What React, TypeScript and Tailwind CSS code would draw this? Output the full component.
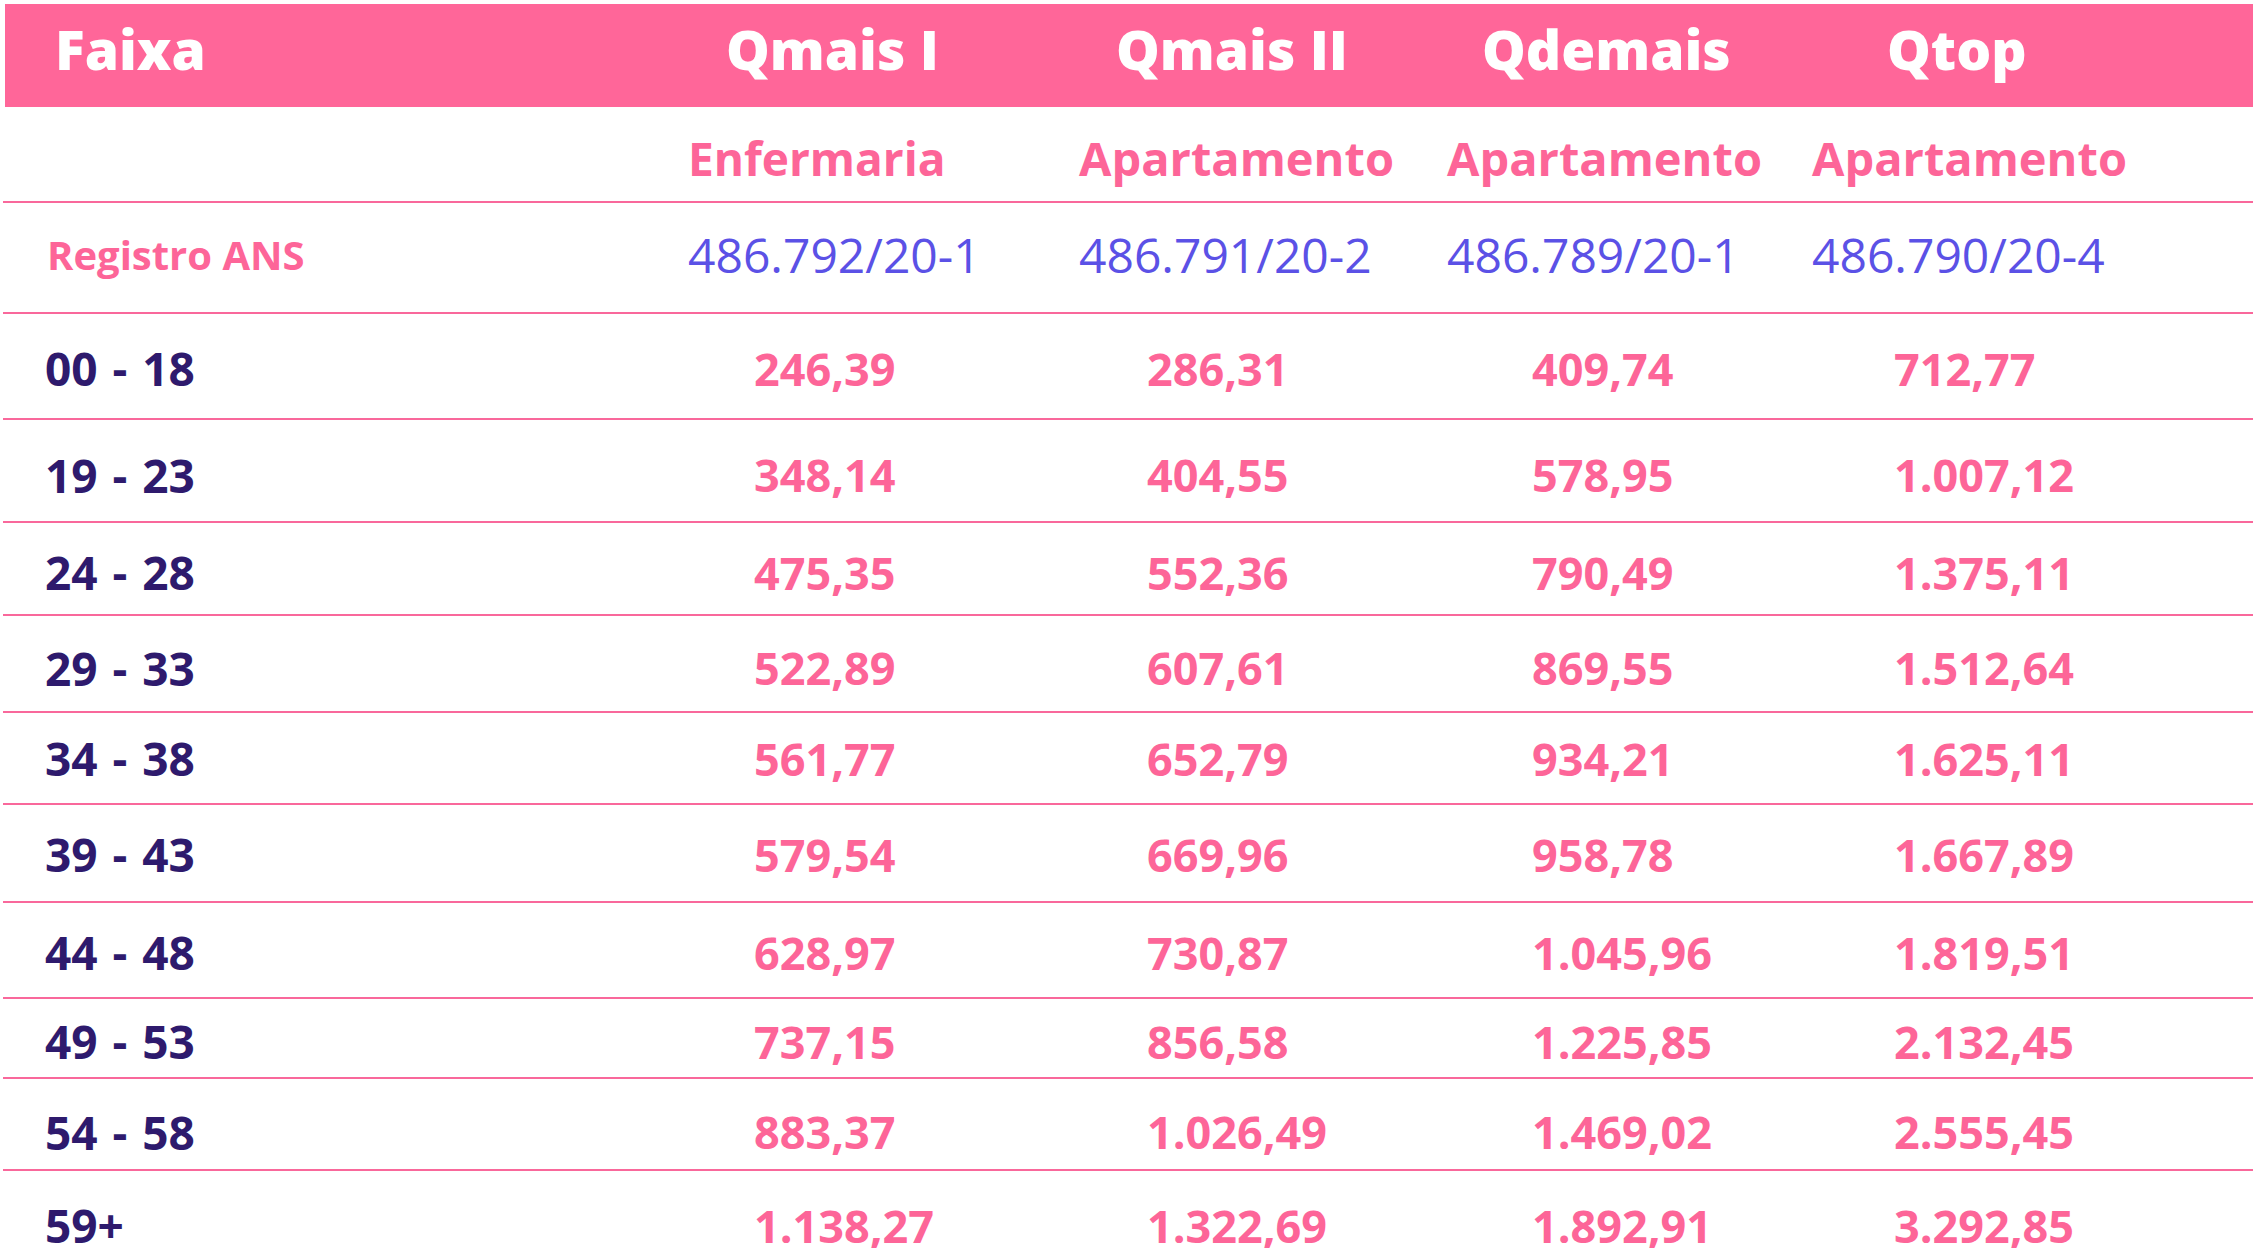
const font = { fontFamily: '"Open Sans", "Noto Sans", sans-serif' };

const headers = [
  { name: "Qmais I", pad: "pl-[36px]" },
  { name: "Qmais II", pad: "pl-[35px]" },
  { name: "Qdemais", pad: "pl-[33px]" },
  { name: "Qtop", pad: "pl-[73px]" },
];

const rooms = ["Enfermaria", "Apartamento", "Apartamento", "Apartamento"];
const ans = ["486.792/20-1", "486.791/20-2", "486.789/20-1", "486.790/20-4"];
const valuePads = ["pl-[66px]", "pl-[68px]", "pl-[85px]", "pl-[82px]"];

const rows = [
  { faixa: "00 - 18", values: ["246,39", "286,31", "409,74", "712,77"], box: "h-[106px] pt-[4px]" },
  { faixa: "19 - 23", values: ["348,14", "404,55", "578,95", "1.007,12"], box: "h-[103px] pt-[8px]" },
  { faixa: "24 - 28", values: ["475,35", "552,36", "790,49", "1.375,11"], box: "h-[93px] pt-[7px]" },
  { faixa: "29 - 33", values: ["522,89", "607,61", "869,55", "1.512,64"], box: "h-[97px] pt-[8px]" },
  { faixa: "34 - 38", values: ["561,77", "652,79", "934,21", "1.625,11"], box: "h-[92px] pt-[0px]" },
  { faixa: "39 - 43", values: ["579,54", "669,96", "958,78", "1.667,89"], box: "h-[98px] pt-[2px]" },
  { faixa: "44 - 48", values: ["628,97", "730,87", "1.045,96", "1.819,51"], box: "h-[96px] pt-[4px]" },
  { faixa: "49 - 53", values: ["737,15", "856,58", "1.225,85", "2.132,45"], box: "h-[80px] pt-[6px]" },
  { faixa: "54 - 58", values: ["883,37", "1.026,49", "1.469,02", "2.555,45"], box: "h-[92px] pt-[15px]" },
  { faixa: "59+", values: ["1.138,27", "1.322,69", "1.892,91", "3.292,85"], box: "h-[108px] pt-[0px]", last: true },
];

const grid = "grid grid-cols-[685px_391px_368px_365px_441px]";

export default function App() {
  return (
    <div className="w-[2256px] h-[1248px] overflow-hidden bg-white pt-[4px]" style={font}>
      <div className="ml-[3px] w-[2250px]">
        {/* header bar */}
        <div className={`${grid} h-[103px] bg-[#ff6699] ml-[2px] items-center pb-[14px] text-white text-[55px] font-extrabold leading-none`}>
          <div className="pl-[50px]">Faixa</div>
          {headers.map((h) => (
            <div key={h.name} className={h.pad}>
              {h.name}
            </div>
          ))}
        </div>

        {/* accommodation */}
        <div className={`${grid} h-[96px] items-center pt-[8px] border-b-2 border-[#f9689b] text-[#fd6598] text-[47px] font-bold leading-none`}>
          <div />
          {rooms.map((r, i) => (
            <div key={i} className={i === 0 ? "text-[46px]" : ""}>
              {r}
            </div>
          ))}
        </div>

        {/* registro ANS */}
        <div className={`${grid} h-[111px] items-center pb-[6px] border-b-2 border-[#f9689b] leading-none`}>
          <div className="pl-[44px] text-[40px] font-bold text-[#fd6598]">Registro ANS</div>
          {ans.map((a) => (
            <div key={a} className="text-[48px] text-[#5b51e6]">
              {a}
            </div>
          ))}
        </div>

        {rows.map((r) => (
          <div
            key={r.faixa}
            className={`${grid} ${r.box} items-center leading-none text-[45px] font-bold ${r.last ? "" : "border-b-2 border-[#f9689b]"}`}
          >
            <div className="pl-[42px] text-[46px] [word-spacing:3px] text-[#2e1a6d]">{r.faixa}</div>
            {r.values.map((v, i) => (
              <div key={i} className={`${valuePads[i]} text-[#fd6598]`}>
                {v}
              </div>
            ))}
          </div>
        ))}
      </div>
    </div>
  );
}
